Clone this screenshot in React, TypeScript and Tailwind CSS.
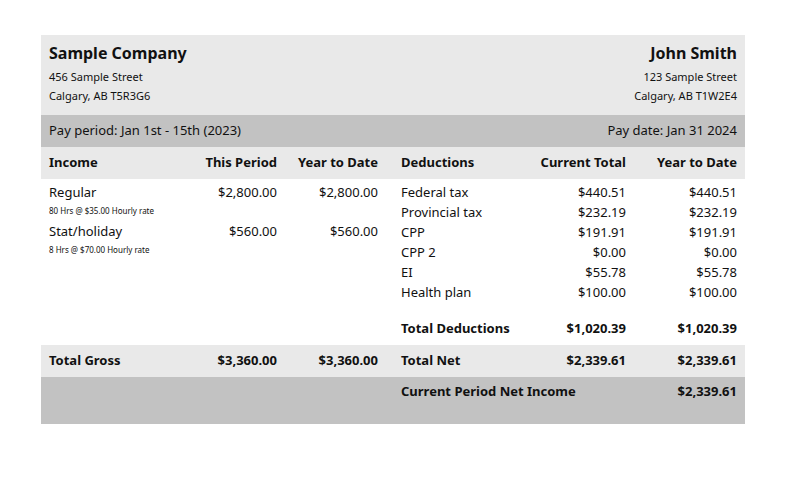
const L = 'grid grid-cols-[144px_100px_101px]';
const R = 'grid grid-cols-[140px_108px_111px]';

const income = [
  { name: 'Regular', note: '80 Hrs @ $35.00 Hourly rate', period: '$2,800.00', ytd: '$2,800.00' },
  { name: 'Stat/holiday', note: '8 Hrs @ $70.00 Hourly rate', period: '$560.00', ytd: '$560.00' },
];

const deductions = [
  ['Federal tax', '$440.51', '$440.51'],
  ['Provincial tax', '$232.19', '$232.19'],
  ['CPP', '$191.91', '$191.91'],
  ['CPP 2', '$0.00', '$0.00'],
  ['EI', '$55.78', '$55.78'],
  ['Health plan', '$100.00', '$100.00'],
];

export default function App() {
  return (
    <div className="min-h-screen bg-white pt-[35px] pl-[41px] text-[#111] font-['Liberation_Sans',Arial,sans-serif]">
      <div className="w-[704px]">
        {/* Header */}
        <div className="h-[80px] bg-[#e9e9e9] px-2 pt-[8px] flex justify-between">
          <div>
            <div className="text-[16px] font-bold leading-[20px]">Sample Company</div>
            <div className="text-[11px] leading-[19px] mt-[4px]">456 Sample Street</div>
            <div className="text-[11px] leading-[19px]">Calgary, AB T5R3G6</div>
          </div>
          <div className="text-right">
            <div className="text-[16px] font-bold leading-[20px]">John Smith</div>
            <div className="text-[11px] leading-[19px] mt-[4px]">123 Sample Street</div>
            <div className="text-[11px] leading-[19px]">Calgary, AB T1W2E4</div>
          </div>
        </div>

        {/* Pay period */}
        <div className="h-[32px] bg-[#c2c2c2] px-2 flex items-center justify-between text-[13px]">
          <span>Pay period: Jan 1st - 15th (2023)</span>
          <span>Pay date: Jan 31 2024</span>
        </div>

        {/* Column headings */}
        <div className="h-[32px] bg-[#e9e9e9] flex items-center text-[13px] font-bold">
          <div className={L}>
            <div className="pl-2">Income</div>
            <div className="text-right pr-2">This Period</div>
            <div className="text-right pr-2">Year to Date</div>
          </div>
          <div className={R}>
            <div className="pl-[15px]">Deductions</div>
            <div className="text-right pr-2">Current Total</div>
            <div className="text-right pr-2">Year to Date</div>
          </div>
        </div>

        {/* Body */}
        <div className="flex h-[166px] pt-[3px] text-[13px]">
          <div className="w-[345px]">
            {income.map((i) => (
              <div key={i.name}>
                <div className={`${L} leading-[20px]`}>
                  <div className="pl-2">{i.name}</div>
                  <div className="text-right pr-2">{i.period}</div>
                  <div className="text-right pr-2">{i.ytd}</div>
                </div>
                <div className="pl-2 text-[8px] leading-[17px] h-[19px]">{i.note}</div>
              </div>
            ))}
          </div>
          <div className="w-[359px]">
            {deductions.map(([n, c, y]) => (
              <div key={n} className={`${R} leading-[20px]`}>
                <div className="pl-[15px]">{n}</div>
                <div className="text-right pr-2">{c}</div>
                <div className="text-right pr-2">{y}</div>
              </div>
            ))}
            <div className={`${R} leading-[20px] mt-[16px] font-bold`}>
              <div className="pl-[15px]">Total Deductions</div>
              <div className="text-right pr-2">$1,020.39</div>
              <div className="text-right pr-2">$1,020.39</div>
            </div>
          </div>
        </div>

        {/* Totals */}
        <div className="h-[32px] bg-[#e9e9e9] flex items-center text-[13px] font-bold">
          <div className={L}>
            <div className="pl-2">Total Gross</div>
            <div className="text-right pr-2">$3,360.00</div>
            <div className="text-right pr-2">$3,360.00</div>
          </div>
          <div className={R}>
            <div className="pl-[15px]">Total Net</div>
            <div className="text-right pr-2">$2,339.61</div>
            <div className="text-right pr-2">$2,339.61</div>
          </div>
        </div>

        {/* Net income */}
        <div className="h-[47px] bg-[#c2c2c2] flex text-[13px] font-bold pt-[4px]">
          <div className="w-[345px]" />
          <div className="w-[359px] flex justify-between leading-[20px]">
            <span className="pl-[15px]">Current Period Net Income</span>
            <span className="pr-2">$2,339.61</span>
          </div>
        </div>
      </div>
    </div>
  );
}
